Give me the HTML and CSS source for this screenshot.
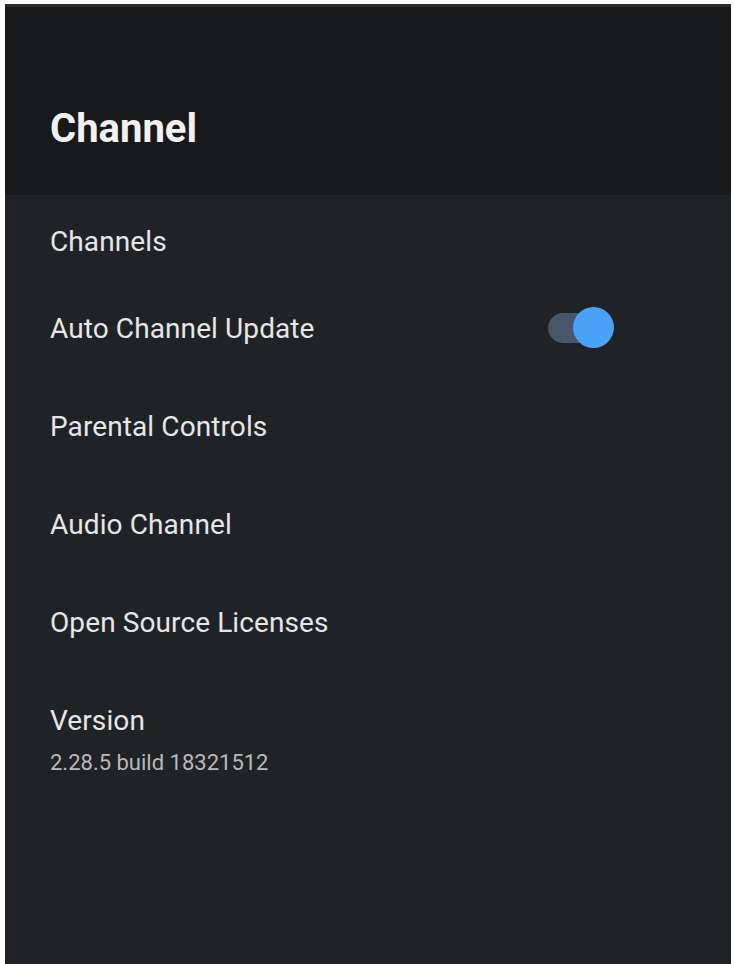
FILE: index.html
```html
<!DOCTYPE html>
<html lang="en">
<head>
<meta charset="utf-8">
<title>Channel</title>
<link rel="stylesheet" href="styles.css">
</head>
<body>
<div class="frame">
  <div class="screen">
    <header class="header">
      <h1 class="title">Channel</h1>
    </header>
    <ul class="list">
      <li class="item item-first"><span class="label">Channels</span></li>
      <li class="item item-toggle">
        <span class="label">Auto Channel Update</span>
        <span class="switch"><span class="track"></span><span class="thumb"></span></span>
      </li>
      <li class="item"><span class="label">Parental Controls</span></li>
      <li class="item"><span class="label">Audio Channel</span></li>
      <li class="item"><span class="label">Open Source Licenses</span></li>
      <li class="item item-version">
        <span class="label">Version</span>
        <span class="sub">2.28.5 build 18321512</span>
      </li>
    </ul>
  </div>
</div>
</body>
</html>
```
FILE: styles.css
```css
html, body {
  margin: 0;
  padding: 0;
  background: #ffffff;
}
body {
  font-family: Roboto, "Noto Sans", sans-serif;
}
.frame {
  padding: 4px 3px 0 5px;
  height: 964px;
  box-sizing: border-box;
  overflow: hidden;
}
.screen {
  height: 961px;
  background: #202326;
  border-left: 14px solid #232228;
  box-sizing: border-box;
  display: flex;
  flex-direction: column;
}
.header {
  height: 191px;
  box-sizing: border-box;
  background: #18191b;
  border-top: 3px solid #2a2b2d;
  padding: 98px 0 0 45px;
  margin-left: -14px;
}
.title {
  margin: 0;
  font-size: 40px;
  line-height: 48px;
  font-weight: 700;
  color: #f1f1f1;
}
.list {
  list-style: none;
  margin: 0;
  padding: 30px 0 0 31px;
}
.item {
  height: 98px;
  display: flex;
  flex-direction: column;
}
.item-first {
  height: 87px;
}
.label {
  font-size: 28px;
  line-height: 34px;
  color: #e6e6e6;
  letter-spacing: 0.1px;
}
.item-toggle {
  flex-direction: row;
  align-items: flex-start;
  justify-content: space-between;
  width: 565px;
}
.switch {
  position: relative;
  width: 67px;
  height: 42px;
  margin-top: -5px;
}
.track {
  position: absolute;
  left: 0;
  top: 6px;
  width: 56px;
  height: 30px;
  border-radius: 15px;
  background: #475669;
}
.thumb {
  position: absolute;
  left: 25px;
  top: 0;
  width: 41px;
  height: 41px;
  border-radius: 50%;
  background: #4aa2f6;
}
.sub {
  margin-top: 12px;
  font-size: 22px;
  line-height: 26px;
  color: #b9b9b9;
  letter-spacing: 0;
}
```
